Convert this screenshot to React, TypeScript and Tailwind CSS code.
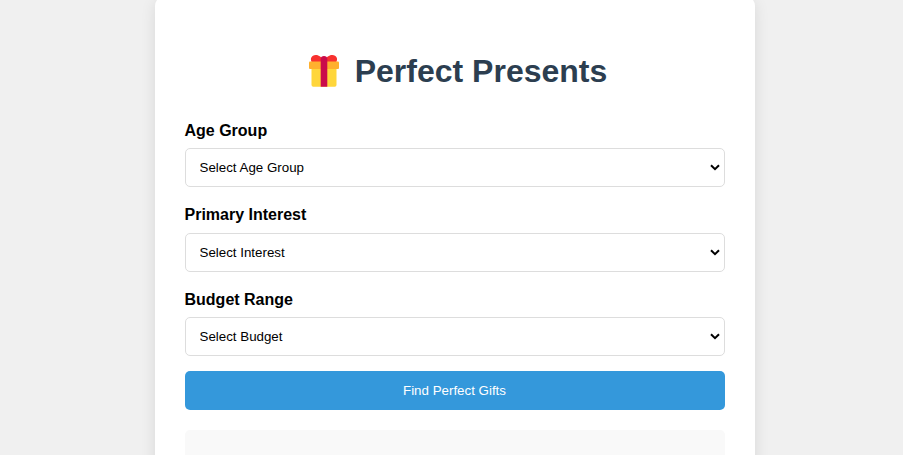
type FieldProps = { id: string; label: string; placeholder: string; className: string; labelClass: string };

function Field({ id, label, placeholder, className, labelClass }: FieldProps) {
  return (
    <div className={className}>
      <label htmlFor={id} className={`block h-[28px] text-[16px] leading-[20px] font-bold text-black ${labelClass}`}>
        {label}
      </label>
      <div className="relative">
        <select
          id={id}
          className="block h-[39px] w-full appearance-none rounded-[5px] border border-[#dddddd] bg-white px-[14px] text-[13.333px] text-black"
        >
          <option>{placeholder}</option>
        </select>
        <svg
          width="10"
          height="7"
          viewBox="0 0 10 7"
          className="pointer-events-none absolute top-[16px] right-[4.500px]"
          aria-hidden="true"
        >
          <path d="M1 1.200l4 4 4-4" fill="none" stroke="#000000" strokeWidth="2" />
        </svg>
      </div>
    </div>
  );
}

function Gift() {
  return (
    <svg width="32" height="34" viewBox="0 0 32 34" className="shrink-0" aria-hidden="true">
      <path d="M3.500 13h25v18a1.800 1.800 0 0 1-1.800 1.800H5.300A1.800 1.800 0 0 1 3.500 31z" fill="#ffd63b" />
      <path d="M16 8.500H4C1.500 5 3.500 1 7.700 1 11.500 1 13 3.800 16 5c3-1.200 4.500-4 8.300-4 4.200 0 6.200 4 3.700 7.500z" fill="#f8312f" />
      <rect x="1" y="7.500" width="30" height="7.500" rx="1" fill="#ffb02e" />
      <path d="M12.700 32.800V5.200c0-2 1.300-3.200 3.300-3.200s3.300 1.200 3.300 3.200v27.600z" fill="#ca0b4a" />
    </svg>
  );
}

export default function App() {
  return (
    <main className="h-[455px] overflow-hidden bg-[#f0f0f0] pl-[154.5px] font-['Liberation_Sans',Arial,sans-serif]">
      <section className="-mt-[4px] h-[520px] w-[600px] rounded-[10px] bg-white px-[30px] pt-[54px] shadow-[0_4px_15px_rgba(0,0,0,0.1)]">
        <h1 className="flex h-[73px] items-start justify-center gap-[15px] pl-[6px] text-[32px] leading-[42px] font-bold text-[#2c3e50]">
          <span className="pt-[4px]"><Gift /></span>
          <span>Perfect Presents</span>
        </h1>
        <div className="-mt-[3px]">
          <Field id="age" label="Age Group" placeholder="Select Age Group" className="h-[85px]" labelClass="pt-px" />
          <Field id="interest" label="Primary Interest" placeholder="Select Interest" className="h-[84px]" labelClass="pt-0" />
          <Field id="budget" label="Budget Range" placeholder="Select Budget" className="h-[82px]" labelClass="pt-px" />
        </div>
        <button className="block h-[39px] w-full rounded-[5px] bg-[#3498db] text-[13.333px] text-white">
          Find Perfect Gifts
        </button>
        <div className="mt-[20px] h-[80px] rounded-[5px] bg-[#f9f9f9]" />
      </section>
    </main>
  );
}
